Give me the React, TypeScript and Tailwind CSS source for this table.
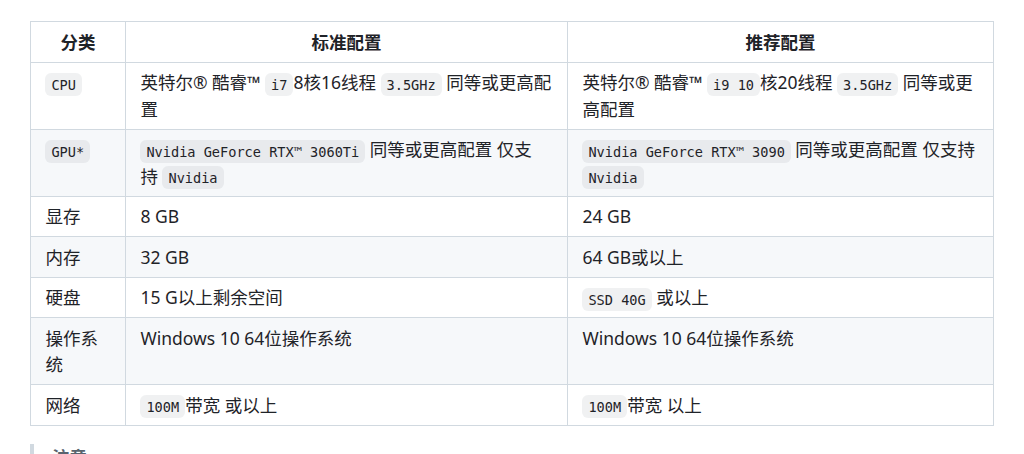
import type { ReactNode } from "react"

const C = ({ children }: { children: ReactNode }) => (
  <code className="rounded-[6px] bg-[#818b981f] px-[6px] py-[3.5px] font-['DejaVu_Sans_Mono','Liberation_Mono',monospace] text-[13.6px] leading-none">
    {children}
  </code>
)

type Row = { label: ReactNode; std: ReactNode; rec: ReactNode }

const rows: Row[] = [
  {
    label: <C>CPU</C>,
    std: (
      <>
        英特尔® 酷睿™ <C>i7</C>8核16线程 <C>3.5GHz</C> 同等或更高配置
      </>
    ),
    rec: (
      <>
        英特尔® 酷睿™ <C>i9 10</C>核20线程 <C>3.5GHz</C> 同等或更高配置
      </>
    ),
  },
  {
    label: <C>GPU*</C>,
    std: (
      <>
        <C>Nvidia GeForce RTX™ 3060Ti</C> 同等或更高配置 仅支
        <br />持 <C>Nvidia</C>
      </>
    ),
    rec: (
      <>
        <C>Nvidia GeForce RTX™ 3090</C> 同等或更高配置 仅支持 <C>Nvidia</C>
      </>
    ),
  },
  { label: "显存", std: "8 GB", rec: "24 GB" },
  { label: "内存", std: "32 GB", rec: "64 GB或以上" },
  {
    label: "硬盘",
    std: "15 G以上剩余空间",
    rec: (
      <>
        <C>SSD 40G</C> 或以上
      </>
    ),
  },
  { label: "操作系统", std: "Windows 10 64位操作系统", rec: "Windows 10 64位操作系统" },
  {
    label: "网络",
    std: (
      <>
        <C>100M</C>带宽 或以上
      </>
    ),
    rec: (
      <>
        <C>100M</C>带宽 以上
      </>
    ),
  },
]

const cell = "border border-[#d1d9e0] px-[14.4px] py-[6.6px] align-top"

export default function App() {
  return (
    <div className="h-[454px] overflow-hidden bg-white pl-[30px] pt-[21px] font-['Noto_Sans','Noto_Sans_CJK_SC',sans-serif] text-[17.5px] leading-[26.4px] text-[#1f2328]">
      <table className="w-[963px] table-fixed border-collapse">
        <colgroup>
          <col className="w-[95px]" />
          <col className="w-[442px]" />
          <col className="w-[426px]" />
        </colgroup>
        <thead>
          <tr className="bg-white">
            <th className={`${cell} text-center font-semibold`}>分类</th>
            <th className={`${cell} text-center font-semibold`}>标准配置</th>
            <th className={`${cell} text-center font-semibold`}>推荐配置</th>
          </tr>
        </thead>
        <tbody>
          {rows.map((r, i) => (
            <tr key={i} className={i % 2 === 1 ? "bg-[#f6f8fa]" : "bg-white"}>
              <td className={cell}>{r.label}</td>
              <td className={cell}>{r.std}</td>
              <td className={cell}>{r.rec}</td>
            </tr>
          ))}
        </tbody>
      </table>
      <blockquote className="mt-[18px] border-l-[4px] border-[#d1d9e0] px-[18px] text-[#59636e]">
        <p className="font-semibold">注意</p>
      </blockquote>
    </div>
  )
}
